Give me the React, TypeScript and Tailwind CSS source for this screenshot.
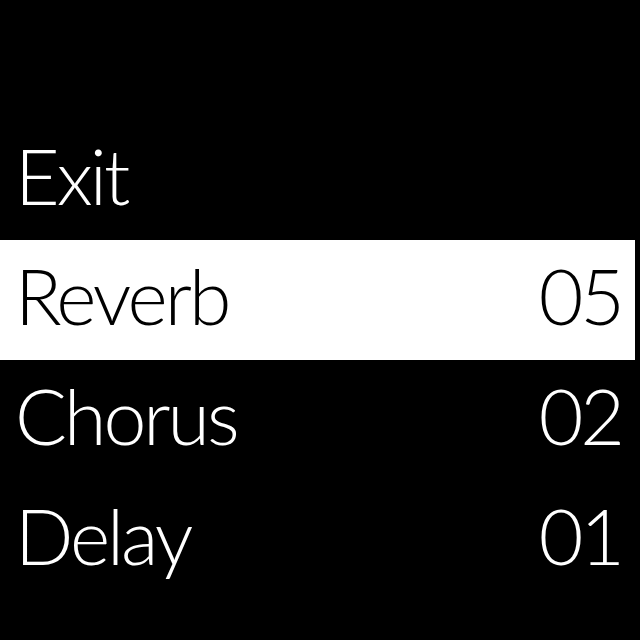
const items = [
  { label: 'Exit', value: '' },
  { label: 'Reverb', value: '05' },
  { label: 'Chorus', value: '02' },
  { label: 'Delay', value: '01' },
];

const selected = 1;

export default function App() {
  return (
    <div
      className="w-[640px] h-[640px] bg-black overflow-hidden pt-[120px]"
      style={{ fontFamily: 'Lato, "Liberation Sans", Arial, sans-serif' }}
    >
      {items.map((item, i) => (
        <div
          key={item.label}
          className={`w-[635px] h-[120px] flex justify-between pl-[15px] pr-[13px] text-[77px] font-light leading-[110px] tracking-[-3px] ${
            i === selected ? 'bg-white text-black' : 'text-white'
          }`}
        >
          <span>{item.label}</span>
          <span>{item.value}</span>
        </div>
      ))}
    </div>
  );
}
